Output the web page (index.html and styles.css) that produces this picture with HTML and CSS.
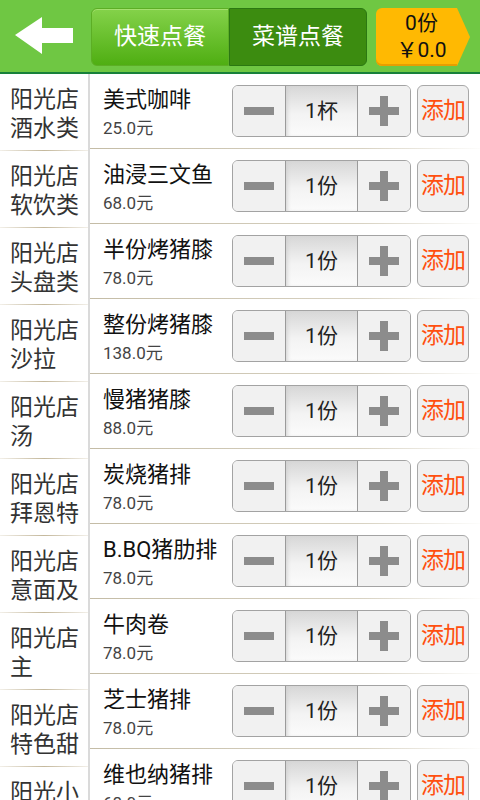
FILE: index.html
```html
<!DOCTYPE html>
<html lang="zh">
<head>
  <meta charset="UTF-8">
  <title>菜谱点餐</title>
  <link rel="stylesheet" href="styles.css">
</head>
<body>

  <div class="topbar">
    <div class="back">
      <svg width="60" height="38" viewBox="0 0 60 38">
        <polygon points="0,18 27,0 27,11 58,11 58,26 27,26 27,37" fill="#fff"/>
      </svg>
    </div>
    <div class="seg">
      <div class="seg-btn seg-left">快速点餐</div>
      <div class="seg-btn seg-right">菜谱点餐</div>
    </div>
    <div class="cart">
      <div class="cart-body">
        <div>0份</div>
        <div>￥0.0</div>
      </div>
      <div class="cart-tip"></div>
    </div>
  </div>

  <div class="main">
    <ul class="cats">
      <li>阳光店酒水类</li>
      <li>阳光店软饮类</li>
      <li>阳光店头盘类</li>
      <li>阳光店沙拉</li>
      <li>阳光店汤</li>
      <li>阳光店拜恩特</li>
      <li>阳光店意面及</li>
      <li>阳光店主</li>
      <li>阳光店特色甜</li>
      <li>阳光小吃</li>
    </ul>

    <ul class="dishes" id="dishes"></ul>
  </div>

  <script>
    const dishes = [
      ["美式咖啡", "25.0元", "1杯"],
      ["油浸三文鱼", "68.0元", "1份"],
      ["半份烤猪膝", "78.0元", "1份"],
      ["整份烤猪膝", "138.0元", "1份"],
      ["慢猪猪膝", "88.0元", "1份"],
      ["炭烧猪排", "78.0元", "1份"],
      ["B.BQ猪肋排", "78.0元", "1份"],
      ["牛肉卷", "78.0元", "1份"],
      ["芝士猪排", "78.0元", "1份"],
      ["维也纳猪排", "68.0元", "1份"]
    ];

    const ul = document.getElementById("dishes");
    dishes.forEach(d => {
      const li = document.createElement("li");
      li.innerHTML = `
        <div class="info">
          <div class="name">${d[0]}</div>
          <div class="price">${d[1]}</div>
        </div>
        <div class="stepper">
          <div class="minus"><span class="bar"></span></div>
          <div class="qty">${d[2]}</div>
          <div class="plus"><span class="bar"></span><span class="bar v"></span></div>
        </div>
        <div class="add">添加</div>
      `;
      ul.appendChild(li);
    });
  </script>

</body>
</html>
```

FILE: styles.css
```css
body {
  margin: 0;
  width: 480px;
  height: 800px;
  overflow: hidden;
  font-family: Roboto, "Noto Sans CJK SC", sans-serif;
  background: #fff;
}
ul {
  list-style: none;
  margin: 0;
  padding: 0;
}

/* top bar */
.topbar {
  height: 72px;
  border-bottom: 2px solid #17803a;
  background: #6fc743;
  display: flex;
  align-items: flex-start;
}
.back {
  width: 91px;
  height: 72px;
  display: flex;
  align-items: center;
  padding-left: 15px;
  box-sizing: border-box;
}
.seg {
  display: flex;
  margin-top: 8px;
}
.seg-btn {
  width: 138px;
  height: 58px;
  box-sizing: border-box;
  color: #fff;
  font-size: 23px;
  line-height: 56px;
  text-align: center;
}
.seg-left {
  background: linear-gradient(#84d24a, #4fae12);
  border: 1px solid #5cae25;
  border-radius: 6px 0 0 6px;
  box-shadow: inset 0 1px 0 #a6e070;
}
.seg-right {
  background: #3c8c10;
  border: 1px solid #2b7812;
  border-radius: 0 6px 6px 0;
}
.cart {
  display: flex;
  margin-top: 8px;
  margin-left: 9px;
}
.cart-body {
  width: 81px;
  height: 58px;
  box-sizing: border-box;
  padding-left: 10px;
  padding-top: 2px;
  background: #ffb902;
  border-radius: 6px 0 0 6px;
  box-shadow: inset 0 -2px 0 #e89e00;
  color: #111;
  font-size: 21px;
  line-height: 27px;
  text-align: center;
}
.cart-tip {
  width: 0;
  height: 0;
  border-left: 13px solid #ffb902;
  border-top: 29px solid transparent;
  border-bottom: 29px solid transparent;
}

/* body */
.main {
  display: flex;
  height: 726px;
}
.cats {
  width: 88px;
  flex: none;
  border-right: 2px solid #dadada;
}
.cats li {
  height: 76px;
  padding: 4px 0 0 10px;
  box-sizing: border-box;
  margin-bottom: 1px;
  font-size: 23px;
  line-height: 29px;
  color: #333;
  display: flex;
  align-items: center;
  position: relative;
}
.cats li::after {
  content: "";
  position: absolute;
  left: 0;
  right: 0;
  bottom: -1px;
  height: 1px;
  background: linear-gradient(to right, #f2efe8, #c4b89c 50%, #f2efe8);
}

.dishes {
  flex: 1;
}
.dishes li {
  height: 75px;
  box-sizing: border-box;
  padding: 11px 11px 0 13px;
  display: flex;
  align-items: flex-start;
  background: linear-gradient(to right, #c4bca6, #d8d2c2 70%, #fdfdfc) bottom / 100% 1px no-repeat;
}
.info {
  width: 129px;
  flex: none;
  padding-top: 2px;
}
.name {
  font-size: 22px;
  line-height: 26px;
  color: #111;
  white-space: nowrap;
}
.price {
  margin-top: 5px;
  font-size: 17px;
  line-height: 20px;
  color: #444;
}

.stepper {
  width: 179px;
  height: 52px;
  box-sizing: border-box;
  border: 1px solid #a3a3a3;
  border-radius: 6px;
  overflow: hidden;
  display: flex;
}
.minus, .plus {
  width: 52px;
  background: #f1f1f1;
  display: flex;
  align-items: center;
  justify-content: center;
  position: relative;
}
.minus {
  border-right: 1px solid #9a9a9a;
}
.plus {
  border-left: 1px solid #9a9a9a;
}
.bar {
  display: block;
  width: 30px;
  height: 8px;
  background: #8c8c8c;
}
.bar.v {
  position: absolute;
  width: 8px;
  height: 30px;
}
.qty {
  flex: 1;
  background: linear-gradient(#d7d7d7, #f3f3f3 55%, #fbfbfb);
  box-shadow: inset 3px 0 4px -2px #cfcfcf;
  font-size: 21px;
  line-height: 50px;
  text-align: center;
  color: #222;
}
.add {
  width: 52px;
  height: 52px;
  margin-left: 6px;
  box-sizing: border-box;
  background: #f0f0f0;
  border: 1px solid #a8a8a8;
  border-radius: 6px;
  color: #ff4f0f;
  font-size: 23px;
  line-height: 50px;
  text-align: center;
  white-space: nowrap;
  letter-spacing: -1px;
  overflow: visible;
}
```
